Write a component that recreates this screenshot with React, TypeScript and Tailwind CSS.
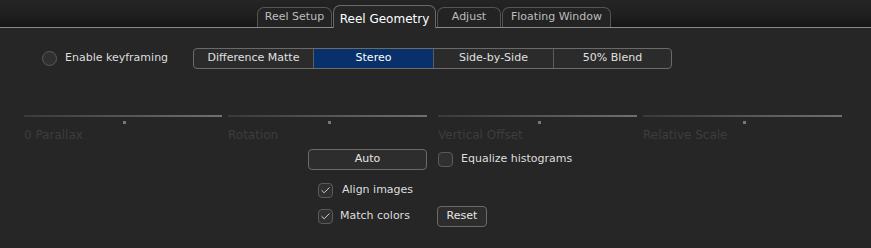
import { Check } from 'lucide-react';

const tabs = [
  { label: 'Reel Setup', w: 'w-[75px]' },
  { label: 'Reel Geometry', w: 'w-[103px]' },
  { label: 'Adjust', w: 'w-[64px]' },
  { label: 'Floating Window', w: 'w-[109px]' },
];
const modes = [
  { label: 'Difference Matte', w: 'w-[119px]' },
  { label: 'Stereo', w: 'w-[120px]' },
  { label: 'Side-by-Side', w: 'w-[120px]' },
  { label: '50% Blend', w: 'w-[118px]' },
];
const sliders = [
  { label: '0 Parallax', w: 'w-[198px]', ml: 'ml-[24px]' },
  { label: 'Rotation', w: 'w-[199px]', ml: 'ml-[6px]' },
  { label: 'Vertical Offset', w: 'w-[199px]', ml: 'ml-[11px]' },
  { label: 'Relative Scale', w: 'w-[199px]', ml: 'ml-[6px]' },
];

function Box({ checked }: { checked?: boolean }) {
  return (
    <div className="w-[15px] h-[15px] rounded-[4px] border border-[#5a5a5a] bg-[#303030] flex items-center justify-center shrink-0">
      {checked && <Check size={11} strokeWidth={2} className="text-[#dcdcdc]" />}
    </div>
  );
}

export default function App() {
  return (
    <div className="w-[871px] h-[248px] bg-[#262626] text-[11px] text-[#dedede] overflow-hidden" style={{ fontFamily: '"DejaVu Sans", sans-serif' }}>
      {/* tab strip */}
      <div className="h-[28px] bg-gradient-to-b from-[#242424] via-[#202020] to-[#151515] border-b border-[#8a8a8a] flex items-end pl-[257px]">
        {tabs.map((t) => {
          const active = t.label === 'Reel Geometry';
          return active ? (
            <div key={t.label} className={`${t.w} h-[23px] -mb-px pt-[3px] mr-px rounded-t-[7px] border border-b-0 border-[#6a6a6a] bg-[#262626] text-white text-[12px] flex items-center justify-center`}>
              {t.label}
            </div>
          ) : (
            <div key={t.label} className={`${t.w} h-[20px] mr-px rounded-t-[7px] border border-b-0 border-[#555] bg-[#232323] text-[#bdbdbd] flex items-center justify-center`}>
              {t.label}
            </div>
          );
        })}
      </div>

      {/* keyframing + mode */}
      <div className="flex items-center mt-[20px] h-[21px]">
        <div className="ml-[42px] w-[15px] h-[15px] rounded-full border border-[#5a5a5a] bg-[#303030] shrink-0" />
        <span className="ml-[8px] w-[128px] shrink-0">Enable keyframing</span>
        <div className="flex h-[21px] rounded-[4px] border border-[#6a6a6a] bg-[#2b2b2b] overflow-hidden">
          {modes.map((m, i) => (
            <div
              key={m.label}
              className={`${m.w} flex items-center justify-center ${i > 0 ? 'border-l border-[#5c5c5c]' : ''} ${m.label === 'Stereo' ? 'bg-[#08306a] text-white' : 'text-[#e0e0e0]'}`}
            >
              {m.label}
            </div>
          ))}
        </div>
      </div>

      {/* sliders */}
      <div className="flex mt-[46px]">
        {sliders.map((s) => (
          <div key={s.label} className={`${s.w} ${s.ml} flex flex-col`}>
            <div className="h-[2px] bg-gradient-to-r from-[#3a3a3a] via-[#555] to-[#707070]" />
            <div className="h-[6px] relative">
              <div className="absolute left-1/2 top-[4px] w-[3px] h-[3px] bg-[#777]" />
            </div>
            <span className="mt-[6px] text-[#3d3d3d] text-[12px] leading-none">{s.label}</span>
          </div>
        ))}
      </div>

      {/* controls */}
      <div className="flex items-center mt-[8px] h-[21px]">
        <button className="ml-[308px] w-[119px] h-[21px] rounded-[4px] border border-[#6a6a6a] bg-[#2d2d2d] text-[#e6e6e6]">Auto</button>
        <div className="ml-[11px] w-[15px] h-[15px] rounded-[4px] border border-[#5a5a5a] bg-[#303030]" />
        <span className="ml-[8px]">Equalize histograms</span>
      </div>
      <div className="flex items-center mt-[13px] h-[15px]">
        <div className="ml-[318px]"><Box checked /></div>
        <span className="ml-[9px]">Align images</span>
      </div>
      <div className="flex items-center mt-[8px] h-[21px]">
        <div className="ml-[318px]"><Box checked /></div>
        <span className="ml-[7px]">Match colors</span>
        <button className="ml-[27px] w-[50px] h-[21px] rounded-[4px] border border-[#6a6a6a] bg-[#2d2d2d] text-[#e6e6e6]">Reset</button>
      </div>
    </div>
  );
}
